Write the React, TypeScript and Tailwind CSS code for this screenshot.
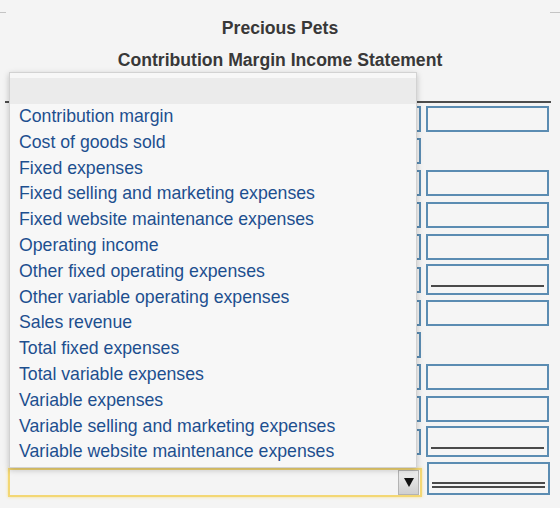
import React from "react";

const options = [
  "Contribution margin",
  "Cost of goods sold",
  "Fixed expenses",
  "Fixed selling and marketing expenses",
  "Fixed website maintenance expenses",
  "Operating income",
  "Other fixed operating expenses",
  "Other variable operating expenses",
  "Sales revenue",
  "Total fixed expenses",
  "Total variable expenses",
  "Variable expenses",
  "Variable selling and marketing expenses",
  "Variable website maintenance expenses",
];

type Row = {
  mt: string;
  h: string;
  amount: "none" | "plain" | "single" | "double";
};

const rows: Row[] = [
  { mt: "mt-[3px]", h: "h-[26px]", amount: "plain" },
  { mt: "mt-[6px]", h: "h-[26px]", amount: "none" },
  { mt: "mt-[6px]", h: "h-[26px]", amount: "plain" },
  { mt: "mt-[6px]", h: "h-[26px]", amount: "plain" },
  { mt: "mt-[6px]", h: "h-[26px]", amount: "plain" },
  { mt: "mt-[4px]", h: "h-[31px]", amount: "single" },
  { mt: "mt-[5px]", h: "h-[26px]", amount: "plain" },
  { mt: "mt-[6px]", h: "h-[26px]", amount: "none" },
  { mt: "mt-[6px]", h: "h-[26px]", amount: "plain" },
  { mt: "mt-[6px]", h: "h-[26px]", amount: "plain" },
  { mt: "mt-[4px]", h: "h-[31px]", amount: "single" },
];

function AmountBox({ kind }: { kind: Row["amount"] }) {
  if (kind === "none") return <div className="w-[123px] ml-[5px]" />;
  return (
    <div className="ml-[5px] w-[123px] h-full border-2 border-[#5b8cb2] bg-[#f5f5f5] flex flex-col justify-end px-[3px] pb-[6px]">
      {kind === "single" && <div className="h-[2px] bg-[#4a4a4a]" />}
    </div>
  );
}

function LabelSelect() {
  return <div className="ml-[4px] w-[412px] h-[26px] border-2 border-[#5b8cb2] bg-[#f5f5f5]" />;
}

export default function App() {
  return (
    <div className="relative w-[560px] h-[508px] overflow-hidden bg-[#f4f4f4] font-['Liberation_Sans',Arial,sans-serif]">
      <div className="pt-[12px]">
        <div className="flex justify-between">
          <div className="h-px w-[6px] bg-[#c4c4c4]" />
          <div className="h-px w-[10px] bg-[#c4c4c4]" />
        </div>

        <div className="mt-[5px] text-center text-[17.6px] leading-[20px] font-bold text-[#383838]">
          Precious Pets
        </div>
        <div className="mt-[12px] text-center text-[17.6px] leading-[20px] font-bold text-[#383838]">
          Contribution Margin Income Statement
        </div>

        {/* statement table */}
        <div className="ml-[5px] w-[546px] mt-[31px]">
          <div className="h-[2px] bg-[#4d4d4d]" />
          {rows.map((r, i) => (
            <div key={i} className={`flex items-center ${r.mt} ${r.h}`}>
              <LabelSelect />
              <AmountBox kind={r.amount} />
            </div>
          ))}
          {/* last row: focused select + total with double rule */}
          <div className="flex mt-[5px] h-[35px]">
            <div className="self-end ml-[3px] w-[414px] h-[29px] border-2 border-[#f3d774] shadow-[0_0_3px_#f5e08f] bg-[#f4f4f4] flex justify-end items-center pr-[1px]">
              <div className="w-[21px] h-[25px] border border-[#b3b3b3] bg-gradient-to-b from-[#f0f0f0] to-[#cfcfcf] flex items-center justify-center">
                <svg width="10" height="9" viewBox="0 0 10 9">
                  <path d="M0 0H10L5 9Z" fill="#111" />
                </svg>
              </div>
            </div>
            <div className="self-start ml-[5px] w-[123px] h-[33px] border-2 border-[#5b8cb2] bg-[#f5f5f5] flex flex-col justify-end px-[3px] pb-[5px] gap-[2px]">
              <div className="h-[2px] bg-[#4a4a4a]" />
              <div className="h-[2px] bg-[#4a4a4a]" />
            </div>
          </div>
        </div>
      </div>

      {/* open option list of the focused select */}
      <div className="absolute left-[9px] top-[72px] w-[408px] h-[396px] border border-[#d2d2d2] bg-[#f7f7f7] shadow-[0_2px_6px_rgba(0,0,0,0.22)] pt-[5px]">
        <div className="h-[26px] bg-[#ebebeb]" />
        {options.map((o) => (
          <div
            key={o}
            className="h-[25.8px] flex items-center pl-[9px] text-[17.7px] leading-none text-[#1d4f8f] whitespace-nowrap"
          >
            {o}
          </div>
        ))}
      </div>
    </div>
  );
}
